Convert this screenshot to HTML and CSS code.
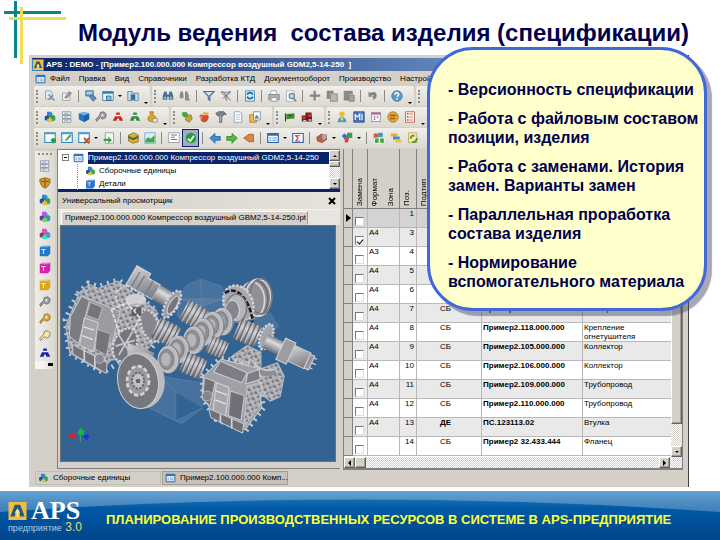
FILE: index.html
```html
<!DOCTYPE html>
<html lang="ru">
<head>
<meta charset="utf-8">
<title>Модуль ведения состава изделия</title>
<link rel="stylesheet" href="styles.css">
</head>
<body>
<svg class="sprite" aria-hidden="true">
  <symbol id="i-page" viewBox="0 0 16 16"><path d="M2 1h7l2 3v8H2z" fill="#dfe6ee" stroke="#8a97a8"/><path d="M6 6l8 8M6 13l6-6" stroke="#7d8ea6" stroke-width="2"/></symbol>
  <symbol id="i-edit" viewBox="0 0 16 16"><path d="M2 4h10v10H2z" fill="#eceff2" stroke="#8b98a5"/><path d="M5 10l6-8 3 2-6 7z" fill="#c98f8f" stroke="#77808c"/></symbol>
  <symbol id="i-server" viewBox="0 0 16 16"><path d="M1 1h10v7H1z" fill="#5fa0cf" stroke="#46657d"/><path d="M2 3h8M2 5h8" stroke="#e9f3fa"/><path d="M6 9l4-3 5 5-4 4z" fill="#5c8db3" stroke="#365a77"/></symbol>
  <symbol id="i-form" viewBox="0 0 16 16"><path d="M1 2h14v12H1z" fill="#e8f4fb" stroke="#2b7199"/><path d="M1 2h14v3H1z" fill="#2c87b8"/><path d="M6 8h6v6H6z" fill="#7cc0d8" stroke="#24617f"/></symbol>
  <symbol id="i-columns" viewBox="0 0 16 16"><path d="M1 2h6v12H1zM9 4h6v10H9z" fill="#c6dcea" stroke="#587992"/><path d="M5 6h6v7H5z" fill="#3b6d91"/></symbol>
  <symbol id="i-binoc" viewBox="0 0 16 16"><path d="M3 2h3l1 5v6H1V8zM10 2h3l2 6v5H9V7zM6 6h4v3H6z" fill="#4a6d94"/><path d="M3 9h2v3H3zM11 9h2v3h-2z" fill="#b8cce2"/></symbol>
  <symbol id="i-binocgray" viewBox="0 0 16 16"><path d="M2 2h3l1 4v5H1V7zM8 2h3l2 5v4l2 3H8V6z" fill="#8b8b88"/></symbol>
  <symbol id="i-funnel" viewBox="0 0 16 16"><path d="M1 2h14L9 8v6l-2-2V8z" fill="#d4e0f1" stroke="#4a6896" stroke-width="1.5"/></symbol>
  <symbol id="i-funneloff" viewBox="0 0 16 16"><path d="M1 3h13L9 8v6l-2-2V8z" fill="#dfe3e8" stroke="#69727d"/><path d="M3 1l11 13M14 1L4 11" stroke="#505d6b"/></symbol>
  <symbol id="i-refresh" viewBox="0 0 16 16"><path d="M2 1h12v14H2z" fill="#d2e8f5" stroke="#3480ad"/><path d="M4 6q4-5 8 0M12 9q-4 5-8 0" fill="none" stroke="#176fae" stroke-width="2.5"/></symbol>
  <symbol id="i-print" viewBox="0 0 16 16"><path d="M4 1h7l1 5H3z" fill="#fff" stroke="#92989e"/><path d="M1 6h14v7H1z" fill="#aeb3b8" stroke="#777e86"/><path d="M4 10h8v5H4z" fill="#f2f2f2" stroke="#85898e"/></symbol>
  <symbol id="i-preview" viewBox="0 0 16 16"><path d="M2 1h10v14H2z" fill="#f8fafb" stroke="#9ba6b0"/><circle cx="9" cy="8" r="3.5" fill="#c3d9e8" stroke="#65859d" stroke-width="1.5"/><path d="M11 11l4 4" stroke="#65859d" stroke-width="2"/></symbol>
  <symbol id="i-cut" viewBox="0 0 16 16"><path d="M6 1h3v5h6v3H9v5H6V9H1V6h5z" fill="#858582"/></symbol>
  <symbol id="i-copy" viewBox="0 0 16 16"><path d="M1 1h9v3H5v8H1z" fill="#858582"/><path d="M6 5h9v10H6z" fill="#b9b8b2" stroke="#777"/></symbol>
  <symbol id="i-paste" viewBox="0 0 16 16"><path d="M1 1h12v5H8v8H1z" fill="#8b8a86"/><path d="M8 7h7v8H8z" fill="#a5a49f" stroke="#777"/></symbol>
  <symbol id="i-undo" viewBox="0 0 16 16"><path d="M2 2l2 2q8-4 9 3 0 4-5 6V9q2-3-2-2l2 2H2z" fill="#858582"/></symbol>
  <symbol id="i-help" viewBox="0 0 16 16"><circle cx="8" cy="8" r="7" fill="#5f9bc9" stroke="#3f6e93"/><path d="M5 6q1-3 4-2 3 2-1 5M8 11v2" fill="none" stroke="#fff" stroke-width="2"/></symbol>
  <symbol id="i-cubes" viewBox="0 0 16 16"><path d="M4 1h5l2 2v5H4z" fill="#2f86cf"/><path d="M1 7l3-1 3 1v5l-3 1-3-1z" fill="#1b4f9f"/><path d="M8 7l4-2 3 2v5l-3 2-4-2z" fill="#35a446"/><path d="M4 11l4-2 3 2v3l-3 1-4-1z" fill="#e8be32"/></symbol>
  <symbol id="i-list" viewBox="0 0 16 16"><path d="M2 1h11v4H2zM2 6h11v4H2zM2 11h11v4H2z" fill="#f4f7fa" stroke="#77889a"/><path d="M4 3h6M4 8h6M4 13h6" stroke="#889"/></symbol>
  <symbol id="i-cube" viewBox="0 0 16 16"><path d="M1 3l7-2 7 2v8l-7 4-7-4z" fill="currentColor"/><path d="M1 3l7-2 7 2-7 3z" fill="#fff" opacity=".4"/><path d="M8 6l7-3v8l-7 4z" fill="#000" opacity=".18"/></symbol>
  <symbol id="i-tcube" viewBox="0 0 16 16"><path d="M1 3l3-2h11v10l-3 4H1z" fill="currentColor"/><path d="M1 3l3-2h11l-3 2z" fill="#fff" opacity=".4"/><path d="M3 6h6M6 6v6" stroke="#fff" stroke-width="1.5" opacity=".8"/></symbol>
  <symbol id="i-bolt" viewBox="0 0 16 16"><path d="M7 2l5-1 3 3-1 5-4 2-3-2-5 5-1-3 5-5z" fill="currentColor" stroke="#555" stroke-width=".8"/><path d="M9 3l3 2-1 3-3-1z" fill="#fff" opacity=".6"/></symbol>
  <symbol id="i-tree" viewBox="0 0 16 16"><path d="M6 2h4l1 3H5zM4 7h8l3 6h-5l-1-3H7l-1 3H1z" fill="currentColor"/><path d="M5 6h6" stroke="#fff"/></symbol>
  <symbol id="i-bag" viewBox="0 0 16 16"><path d="M5 1h5L9 5q5 2 4 7-1 3-6 2-6 0-4-6l3-3z" fill="#dda526" stroke="#9b701a"/><path d="M9 10h6v5H9z" fill="#e8e4d8" stroke="#8b8b80"/></symbol>
  <symbol id="i-parts" viewBox="0 0 16 16"><path d="M1 2l6-1 3 4-4 4-4-2z" fill="#4ca443"/><path d="M7 7l6-2 2 5-4 5-5-3z" fill="#c7a238" stroke="#73702b"/></symbol>
  <symbol id="i-apple" viewBox="0 0 16 16"><path d="M2 6q3-3 6 0 4-3 6 0 1 6-4 9-7 1-8-9z" fill="#d74e2e"/><path d="M8 1v5M9 3h5" stroke="#e8a545" stroke-width="2"/><path d="M4 7v4" stroke="#fff"/></symbol>
  <symbol id="i-hammer" viewBox="0 0 16 16"><path d="M1 3l4-2h7l3 4-4-1v2l-2 1v8H6V7L3 6z" fill="#7e858b" stroke="#4e555b"/><path d="M7 7v7" stroke="#dde1e4"/></symbol>
  <symbol id="i-doc" viewBox="0 0 16 16"><path d="M3 1h8l2 3v11H3z" fill="#fff" stroke="#7593b2"/><path d="M5 5h6M5 8h6M5 11h6" stroke="#91aecd"/></symbol>
  <symbol id="i-photo" viewBox="0 0 16 16"><path d="M1 5h9v10H1z" fill="#f0bd42" stroke="#a47520"/><path d="M6 1h9v11H6z" fill="#fff" stroke="#64829f"/><path d="M7 10l3-5 4 5z" fill="#3d87bf"/></symbol>
  <symbol id="i-flag" viewBox="0 0 16 16"><path d="M3 4l11-1v7L3 11z" fill="#448c35"/><path d="M2 3v11M6 6h5" stroke="#254f20" stroke-width="1.5"/></symbol>
  <symbol id="i-machine" viewBox="0 0 16 16"><path d="M1 6h5V2h8l1 12H1z" fill="#4f2529"/><path d="M2 7h4v4H2zM9 4h4v4H9z" fill="#d8312d"/><path d="M3 13h4M10 12h4" stroke="#e7c3b5" stroke-width="2"/></symbol>
  <symbol id="i-user" viewBox="0 0 16 16"><circle cx="8" cy="4" r="3.5" fill="#edbd35"/><path d="M2 15q1-7 6-7t6 7z" fill="#4a9fc4"/><path d="M6 9h4l-2 5z" fill="#f3df76"/></symbol>
  <symbol id="i-chart" viewBox="0 0 16 16"><path d="M1 1h14v14H1z" fill="#4a73bd" stroke="#2b4b8d"/><path d="M3 12V5l3 3 3-4v8M12 4v8" fill="none" stroke="#fff" stroke-width="1.5"/></symbol>
  <symbol id="i-cal" viewBox="0 0 16 16"><path d="M2 2h12v12H2z" fill="#f6f3f7" stroke="#8c8299"/><path d="M2 2h12v3H2z" fill="#b7708c"/><path d="M5 8h2M9 8h2M5 11h2" stroke="#6f7ea2" stroke-width="2"/></symbol>
  <symbol id="i-coin" viewBox="0 0 16 16"><circle cx="8" cy="8" r="7" fill="#e6a72f" stroke="#a9701d"/><path d="M4 6h8M4 10h7" stroke="#985e18" stroke-width="2"/></symbol>
  <symbol id="i-report" viewBox="0 0 16 16"><path d="M2 1h12v14H2z" fill="#fff5ed" stroke="#b34e37"/><path d="M4 4h2M4 8h2M4 12h2" stroke="#c63d2d" stroke-width="2"/><path d="M7 4h5M7 8h5M7 12h5" stroke="#777"/></symbol>
  <symbol id="i-win" viewBox="0 0 16 16"><path d="M1 1h14v13H1z" fill="#f8fcff" stroke="#3288b5" stroke-width="1.4"/><path d="M1 1h14v2H1z" fill="#4ea0c9"/></symbol>
  <symbol id="i-plus" viewBox="0 0 16 16"><path d="M9 11h7M12.500 8v7" stroke="#1f9b32" stroke-width="3"/></symbol>
  <symbol id="i-pen" viewBox="0 0 16 16"><path d="M5 11l7-8 2 2-7 7z" fill="#43a458"/></symbol>
  <symbol id="i-x" viewBox="0 0 16 16"><path d="M8 8l7 7M15 8l-7 7" stroke="#d84c28" stroke-width="2.500"/></symbol>
  <symbol id="i-export" viewBox="0 0 16 16"><path d="M3 1h11v14H3z" fill="#f4f7f4" stroke="#839286"/><path d="M1 9h6V6l5 5-5 4v-3H1z" fill="#3f9d46"/></symbol>
  <symbol id="i-box" viewBox="0 0 16 16"><path d="M2 4l7-3 6 3v9l-7 2-6-3z" fill="#e4ad2b" stroke="#866921"/><path d="M2 5l6 3 7-3v3l-7 3-6-3z" fill="#32714b"/></symbol>
  <symbol id="i-graph" viewBox="0 0 16 16"><path d="M1 1h14v14H1z" fill="#dceefa" stroke="#6aa0bd"/><path d="M2 14v-4l4-3 3 2 5-5v10z" fill="#43a64d"/></symbol>
  <symbol id="i-text" viewBox="0 0 16 16"><path d="M1 1h14v13H1z" fill="#fff" stroke="#8a8f94"/><path d="M4 4h8M4 7h5M4 10h8" stroke="#444"/></symbol>
  <symbol id="i-ok" viewBox="0 0 16 16"><circle cx="8" cy="8" r="7" fill="#2b9c3e"/><path d="M4 9l3 3 5-7" fill="none" stroke="#e7ffe5" stroke-width="2.500"/></symbol>
  <symbol id="i-left" viewBox="0 0 16 16"><path d="M1 8l7-6v4h7v5H8v4z" fill="#3d8ed6" stroke="#1f5ba0"/></symbol>
  <symbol id="i-right" viewBox="0 0 16 16"><path d="M15 8L8 2v4H1v5h7v4z" fill="#55b93c" stroke="#2e7f21"/></symbol>
  <symbol id="i-back" viewBox="0 0 16 16"><path d="M1 8l7-5h6v10H8z" fill="#e27d3b" stroke="#ae4e29"/><path d="M8 7h5M8 10h5" stroke="#8cb64b" stroke-width="2"/></symbol>
  <symbol id="i-table" viewBox="0 0 16 16"><path d="M1 2h14v12H1z" fill="#fff" stroke="#245f9e" stroke-width="1.500"/><path d="M1 2h14v3H1z" fill="#2d72b6"/><path d="M3 8h3M3 11h3M7 8h6M7 11h6" stroke="#5c93c8" stroke-width="1.500"/></symbol>
  <symbol id="i-sum" viewBox="0 0 16 16"><path d="M1 2h14v12H1z" fill="#fff" stroke="#37669f" stroke-width="1.500"/><path d="M11 5H5l3 3-3 4h6" fill="none" stroke="#c23b40" stroke-width="1.500"/></symbol>
  <symbol id="i-red" viewBox="0 0 16 16"><path d="M1 7l6-4 7 1v6l-6 4-6-2z" fill="#ca5b42" stroke="#814139"/><path d="M8 4l6-2v6l-5 3z" fill="#a5adb3"/></symbol>
  <symbol id="i-shapes" viewBox="0 0 16 16"><path d="M8 1h7v7H8z" fill="#37a246"/><path d="M1 5l4-3 4 4-4 4z" fill="#3a6ec4"/><path d="M5 8h6l-2 6H5z" fill="#db4238"/></symbol>
  <symbol id="i-blocks" viewBox="0 0 16 16"><path d="M1 2h6v7H1z" fill="#d6563a"/><path d="M7 1h6v6H7z" fill="#4f8dc9"/><path d="M2 8h6v7H2zM9 8h6v7H9z" fill="#42a43c" stroke="#fff"/></symbol>
  <symbol id="i-layers" viewBox="0 0 16 16"><path d="M1 2h9v4H1z" fill="#ebad2c"/><path d="M4 6h9v4H4z" fill="#4e89c7"/><path d="M7 10h8v4H7z" fill="#ebc24b"/></symbol>
  <symbol id="i-cycle" viewBox="0 0 16 16"><path d="M2 1h11v13H2z" fill="#f7e7b0" stroke="#c19f42"/><path d="M5 9q0-5 5-4M13 8q0 6-6 5" fill="none" stroke="#3d9b3e" stroke-width="2.500"/></symbol>
  <symbol id="i-shield" viewBox="0 0 16 16"><path d="M1 3l7-2 7 2q0 9-7 12-7-3-7-12z" fill="#cf9a28" stroke="#815b17"/><path d="M8 2v11M3 6h4M9 6h4" stroke="#5e4412"/></symbol>
  <symbol id="i-logo" viewBox="0 0 20 20"><path d="M0 0h20v20H0z" fill="#f3bd45"/><path d="M2 16L7 3h6l5 13h-5l-1-5q-2-3-4 0l-1 5z" fill="#245b7e"/><path d="M10 7l3 5h-2v5H9v-5H7z" fill="#f9e6a5"/></symbol>
</svg>

<header class="slide-head">
  <svg class="cross" viewBox="0 0 66 66" aria-hidden="true">
    <path d="M4 12.500h57" stroke="#0a8585" stroke-width="3"/><path d="M15.500 1v57" stroke="#0a8585" stroke-width="3"/>
    <path d="M9 18.500h58" stroke="#eedd55" stroke-width="3"/><path d="M21.500 7v57" stroke="#eedd55" stroke-width="3"/>
  </svg>
  <h1>Модуль ведения&nbsp; состава изделия (спецификации)</h1>
</header>

<main class="window">
  <div class="titlebar"><svg class="logo-s"><use href="#i-logo"/></svg><span>APS : DEMO - [Пример2.100.000.000 Компрессор воздушный GDM2,5-14-250&nbsp; ]</span></div>
  <nav class="menu"><svg class="ico"><use href="#i-table"/></svg><button>Файл</button><button>Правка</button><button>Вид</button><button>Справочники</button><button>Разработка КТД</button><button>Документооборот</button><button>Производство</button><button>Настрой</button></nav>

  <div class="bar">
    <div class="group">
      <button class="tool" aria-label="Создать"><svg><use href="#i-page"/></svg></button><button class="tool" aria-label="Править"><svg><use href="#i-edit"/></svg></button><i class="sep"></i><button class="tool" aria-label="Сервер"><svg><use href="#i-server"/></svg></button><button class="tool" aria-label="Форма"><svg><use href="#i-form"/></svg></button><i class="drop"></i><button class="tool" aria-label="Колонки"><svg><use href="#i-columns"/></svg></button><i class="more"></i>
    </div>
    <div class="group">
      <button class="tool" aria-label="Найти"><svg><use href="#i-binoc"/></svg></button><button class="tool" aria-label="Найти далее"><svg><use href="#i-binocgray"/></svg></button><i class="sep"></i><button class="tool" aria-label="Фильтр"><svg><use href="#i-funnel"/></svg></button><button class="tool" aria-label="Снять фильтр"><svg><use href="#i-funneloff"/></svg></button><i class="sep"></i><button class="tool" aria-label="Обновить"><svg><use href="#i-refresh"/></svg></button><i class="sep"></i><button class="tool" aria-label="Печать"><svg><use href="#i-print"/></svg></button><button class="tool" aria-label="Просмотр"><svg><use href="#i-preview"/></svg></button><i class="sep"></i><button class="tool" aria-label="Вырезать"><svg><use href="#i-cut"/></svg></button><button class="tool" aria-label="Копировать"><svg><use href="#i-copy"/></svg></button><button class="tool" aria-label="Вставить"><svg><use href="#i-paste"/></svg></button><i class="sep"></i><button class="tool" aria-label="Отменить"><svg><use href="#i-undo"/></svg></button><i class="sep"></i><button class="tool" aria-label="Справка"><svg><use href="#i-help"/></svg></button><i class="more"></i>
    </div>
    <div class="group"></div>
  </div>
  <div class="bar">
    <div class="group">
      <button class="tool" aria-label="Сборки"><svg><use href="#i-cubes"/></svg></button><button class="tool" aria-label="Список"><svg><use href="#i-list"/></svg></button><button class="tool blue" aria-label="Детали"><svg><use href="#i-cube"/></svg></button><button class="tool gray" aria-label="Крепёж"><svg><use href="#i-bolt"/></svg></button><button class="tool red" aria-label="Состав"><svg><use href="#i-tree"/></svg></button><button class="tool green" aria-label="Применяемость"><svg><use href="#i-tree"/></svg></button><button class="tool" aria-label="Материалы"><svg><use href="#i-bag"/></svg></button><i class="more"></i>
    </div>
    <div class="group">
      <button class="tool" aria-label="Узлы"><svg><use href="#i-parts"/></svg></button><button class="tool" aria-label="Сырьё"><svg><use href="#i-apple"/></svg></button><button class="tool" aria-label="Инструмент"><svg><use href="#i-hammer"/></svg></button><button class="tool" aria-label="Документ"><svg><use href="#i-doc"/></svg></button><button class="tool" aria-label="Чертёж"><svg><use href="#i-photo"/></svg></button><i class="more"></i>
    </div>
    <div class="group">
      <button class="tool" aria-label="Цех"><svg><use href="#i-flag"/></svg></button><button class="tool" aria-label="Станок"><svg><use href="#i-machine"/></svg></button><i class="more"></i>
    </div>
    <div class="group">
      <button class="tool" aria-label="Сотрудник"><svg><use href="#i-user"/></svg></button><button class="tool" aria-label="График"><svg><use href="#i-chart"/></svg></button><button class="tool" aria-label="Календарь"><svg><use href="#i-cal"/></svg></button><button class="tool" aria-label="Стоимость"><svg><use href="#i-coin"/></svg></button><button class="tool" aria-label="Отчёт"><svg><use href="#i-report"/></svg></button><i class="more"></i>
    </div>
  </div>
  <div class="bar">
    <div class="group">
      <button class="tool" aria-label="Добавить"><svg><use href="#i-win"/><use href="#i-plus"/></svg></button><button class="tool" aria-label="Изменить"><svg><use href="#i-win"/><use href="#i-pen"/></svg></button><button class="tool" aria-label="Удалить"><svg><use href="#i-win"/><use href="#i-x"/></svg></button><i class="drop"></i><button class="tool" aria-label="Экспорт"><svg><use href="#i-export"/></svg></button><i class="sep"></i><button class="tool" aria-label="Архив"><svg><use href="#i-box"/></svg></button><button class="tool" aria-label="Диаграмма"><svg><use href="#i-graph"/></svg></button><i class="sep"></i><button class="tool" aria-label="Текст"><svg><use href="#i-text"/></svg></button><button class="tool on" aria-label="Утвердить"><svg><use href="#i-ok"/></svg></button><i class="sep"></i><button class="tool" aria-label="Назад"><svg><use href="#i-left"/></svg></button><button class="tool" aria-label="Вперёд"><svg><use href="#i-right"/></svg></button><button class="tool" aria-label="Вернуть"><svg><use href="#i-back"/></svg></button><i class="sep"></i><button class="tool" aria-label="Таблица"><svg><use href="#i-table"/></svg></button><i class="drop"></i><button class="tool" aria-label="Итоги"><svg><use href="#i-sum"/></svg></button><i class="sep"></i><button class="tool" aria-label="Модель"><svg><use href="#i-red"/></svg></button><i class="drop"></i><button class="tool" aria-label="Фигуры"><svg><use href="#i-shapes"/></svg></button><i class="drop"></i><i class="sep"></i><button class="tool" aria-label="Блоки"><svg><use href="#i-blocks"/></svg></button><button class="tool" aria-label="Слои"><svg><use href="#i-layers"/></svg></button><button class="tool" aria-label="Замены"><svg><use href="#i-cycle"/></svg></button>
    </div>
  </div>

  <div class="work">
    <aside class="side">
      <button class="tool" aria-label="Перечень"><svg><use href="#i-list"/></svg></button>
      <button class="tool" aria-label="Защита"><svg><use href="#i-shield"/></svg></button>
      <button class="tool" aria-label="Сборочные единицы"><svg><use href="#i-cubes"/></svg></button>
      <button class="tool hue-a" aria-label="Комплексы"><svg><use href="#i-cubes"/></svg></button>
      <button class="tool hue-b" aria-label="Комплекты"><svg><use href="#i-cubes"/></svg></button>
      <button class="tool blue" aria-label="Детали"><svg><use href="#i-tcube"/></svg></button>
      <button class="tool pink" aria-label="Заготовки"><svg><use href="#i-tcube"/></svg></button>
      <button class="tool gold" aria-label="Материалы"><svg><use href="#i-tcube"/></svg></button>
      <button class="tool gray" aria-label="Стандартные"><svg><use href="#i-bolt"/></svg></button>
      <button class="tool gold" aria-label="Прочие"><svg><use href="#i-bolt"/></svg></button>
      <button class="tool cream" aria-label="Покупные"><svg><use href="#i-bolt"/></svg></button>
      <button class="tool navy" aria-label="Структура"><svg><use href="#i-tree"/></svg></button>
      <i class="side-end"></i>
    </aside>

    <section class="left">
      <div class="tree">
        <ul>
          <li class="sel"><i class="minus"></i><svg class="ico"><use href="#i-table"/></svg><span>Пример2.100.000.000 Компрессор воздушный GDM2,5-14-250</span></li>
          <li class="child"><svg class="ico"><use href="#i-cubes"/></svg><span>Сборочные единицы</span></li>
          <li class="child"><svg class="ico blue"><use href="#i-tcube"/></svg><span>Детали</span></li>
        </ul>
        <div class="vscroll"><button class="arrow up" aria-label="Вверх"></button><i class="thumb"></i><button class="arrow down" aria-label="Вниз"></button></div>
      </div>
      <div class="pane-head"><span>Универсальный просмотрщик</span><button aria-label="Закрыть"><svg viewBox="0 0 8 8"><path d="M1 1l6 6M7 1L1 7" stroke="#000" stroke-width="2"/></svg></button></div>
      <div class="tabs"><button>Пример2.100.000.000 Компрессор воздушный GBM2,5-14-250.ipt</button></div>
      <div class="view">
        <svg viewBox="120 -72 825 708" preserveAspectRatio="xMidYMid slice" role="img" aria-label="Модель компрессора">
          <defs>
            <linearGradient id="m" x1="0" y1="0" x2="1" y2="1"><stop offset="0" stop-color="#cfcfd3"/><stop offset=".5" stop-color="#a2a3a9"/><stop offset="1" stop-color="#77787f"/></linearGradient>
            <linearGradient id="cyl" x1="0" y1="0" x2="0" y2="1"><stop offset="0" stop-color="#85868c"/><stop offset=".35" stop-color="#dddde0"/><stop offset="1" stop-color="#6d6e75"/></linearGradient>
            <pattern id="mesh" width="22" height="20" patternUnits="userSpaceOnUse" patternTransform="rotate(24)"><path d="M0 0h22v20H0z" fill="#a9aab0"/><path d="M2 3h9v6H2zM14 11h6v6h-6z" fill="#74757c"/><path d="M12 2h8M1 14h10M11 9v10" stroke="#d8d8dc" stroke-width="2"/></pattern>
            <g id="ring"><ellipse rx="33" ry="42" fill="#85868c"/><ellipse cx="-3" rx="30" ry="40" fill="#b9babf" stroke="#dcdce0" stroke-width="2"/><ellipse cx="-7" rx="22" ry="30" fill="#8e8f95" stroke="#6c6d74" stroke-width="2"/><ellipse cx="-9" rx="14" ry="20" fill="#b5b5ba"/></g>
            <g id="ribs"><path d="M0-32h70v64H0z" fill="url(#cyl)"/><path d="M6-34v68M20-34v68M34-34v68M48-34v68M62-34v68" stroke="#66676e" stroke-width="4"/><path d="M12-34v68M26-34v68M40-34v68M54-34v68" stroke="#c6c6ca" stroke-width="3"/></g>
          </defs>
          <g fill="#7f9cbb" fill-opacity=".28" stroke="#8aa4bf" stroke-opacity=".5" stroke-width="1.500">
            <path d="M470 145l30-40 40-17 65 22 15 60-80 60-70-30z"/><path d="M470 145l75 25 75-25M545 170l-5-80M700 205l50-15 25 40-60 60-60-20z"/><path d="M420 380l125 20v78l-62 46-100-48zM420 430l-37 46M466 430v85l80-40M466 430l-46-50"/>
          </g>
          <path d="M170 132l32-32 30 10 62-20 60 50 50 40 10 90-60 70-60 0-48 30-102-60-12-100z" fill="none" stroke="#c5c6ca" stroke-width="15" stroke-dasharray="6 15"/>
          <path d="M175 128l30-24 28 12 58-22 64 48 52 40 8 80-56 60-88 10-30 35-95-57-12-80z" fill="url(#mesh)" stroke="#b8b9be" stroke-width="3"/>
          <g transform="translate(385 115) rotate(30)"><path d="M-65-40h48v15h42v50h-90z" fill="url(#m)" stroke="#d7d7da" stroke-width="3"/><path d="M-48-28v50M-30-25v48M0-25v50" stroke="#777980" stroke-width="4"/><path d="M25-25h55v50H25z" fill="url(#cyl)"/><ellipse cx="84" cy="8" rx="18" ry="46" fill="#9c9da3" stroke="#d6d6da" stroke-width="7" stroke-dasharray="7 5"/><ellipse cx="88" cy="8" rx="11" ry="30" fill="#77787e" stroke="#d7d7da" stroke-width="3"/></g>
          <use href="#ribs" transform="translate(490 180) rotate(29)"/>
          <ellipse cx="388" cy="228" rx="26" ry="50" transform="rotate(-20 388 228)" fill="#85868d" stroke="#d0d0d4" stroke-width="8" stroke-dasharray="7 5"/>
          <ellipse cx="345" cy="150" rx="32" ry="18" fill="#d0d0d4"/><path d="M332 165h30v35h-30z" fill="#5d5e64"/><ellipse cx="347" cy="167" rx="15" ry="6" fill="#b5b6bb"/>
          <use href="#ribs" transform="translate(405 232) rotate(28)"/>
          <path d="M182 138l116 48-25 98-130-53z" fill="#9b9ca2" stroke="#c6c7cc" stroke-width="3"/>
          <path d="M148 202l34-62 24 12-33 130-28-22z" fill="#7c7d83" stroke="#c7c8cc" stroke-width="3"/><path d="M208 158l37 15-12 38-36-14z" fill="#75767c" stroke="#d1d1d5" stroke-width="2"/><path d="M190 205l42 14-14 88-42-20z" fill="#a4a5ab" stroke="#d6d6da" stroke-width="3"/><path d="M188 232l32 10M184 258l32 12" stroke="#e3e3e6" stroke-width="4"/><path d="M229 240l40 13-12 64-34-18z" fill="#74757b" stroke="#c8c9cd" stroke-width="2"/><path d="M154 285l105 55-3 32-100-58z" fill="#74757c" stroke="#c7c8cd" stroke-width="3"/><path d="M190 302v37M222 318v40" stroke="#d3d3d7" stroke-width="5"/><circle cx="236" cy="328" r="14" fill="#898a91" stroke="#cacbd0" stroke-width="2"/>
          <path d="M285 126l28-20 55 30-25 45-55-20z" fill="none" stroke="#d8d8dc" stroke-width="4" stroke-dasharray="9 4"/><path d="M272 180l48-20 38 45-20 36-44 5z" fill="none" stroke="#e0e0e3" stroke-width="5" stroke-dasharray="12 4"/>
          <ellipse cx="313" cy="286" rx="34" ry="52" transform="rotate(22 313 286)" fill="#75767d" stroke="#cfcfd3" stroke-width="7" stroke-dasharray="8 4"/><path d="M290 250l44 70M336 245l-42 72M284 290l58-18" stroke="#c9c9ce" stroke-width="5"/>
          <path d="M320 280l80 30-10 60-70-15z" fill="url(#m)"/>
          <g><ellipse cx="712" cy="145" rx="44" ry="58" fill="#909197"/><g fill="none" stroke-width="5"><ellipse cx="695" cy="152" rx="38" ry="55" stroke="#d7d7da"/><ellipse cx="705" cy="148" rx="38" ry="56" stroke="#696a71"/><ellipse cx="714" cy="144" rx="38" ry="56" stroke="#d5d5d9"/><ellipse cx="722" cy="140" rx="33" ry="53" stroke="#76777e"/></g><ellipse cx="654" cy="162" rx="43" ry="57" transform="rotate(-24 654 162)" fill="#a8a9ae" stroke="#d3d3d7" stroke-width="7" stroke-dasharray="8 4"/><path d="M613 130q38-25 70 35 12 25 14 52" fill="none" stroke="#202126" stroke-width="8" stroke-dasharray="15 5"/><ellipse cx="648" cy="176" rx="31" ry="42" fill="#b5b6bb" stroke="#77787f" stroke-width="4"/><ellipse cx="636" cy="182" rx="21" ry="30" fill="#85868d" stroke="#dddde0" stroke-width="3"/></g>
          <use href="#ring" x="608" y="216"/><use href="#ring" x="580" y="228"/><use href="#ring" x="550" y="248"/><use href="#ring" x="522" y="272"/><use href="#ring" x="476" y="300"/><use href="#ring" x="445" y="330"/>
          <use href="#ribs" transform="translate(650 235) rotate(24)"/><use href="#ribs" transform="translate(565 282) rotate(24) scale(.8)"/><use href="#ribs" transform="translate(488 335) rotate(24) scale(.95)"/>
          <ellipse cx="362" cy="392" rx="70" ry="86" transform="rotate(-10 362 392)" fill="#bbbcc1"/><ellipse cx="352" cy="395" rx="61" ry="83" transform="rotate(-10 352 395)" fill="#77787e" stroke="#d3d3d7" stroke-width="3"/><ellipse cx="352" cy="394" rx="33" ry="44" fill="#999aa0" stroke="#d5d5d9" stroke-width="8" stroke-dasharray="13 7"/><ellipse cx="352" cy="394" rx="18" ry="24" fill="#bfc0c4" stroke="#5e5f65" stroke-width="5" stroke-dasharray="7 4"/><circle cx="352" cy="395" r="7" fill="#64656c"/>
          <ellipse cx="738" cy="262" rx="18" ry="40" transform="rotate(20 738 262)" fill="#a4a5aa" stroke="#d8d8db" stroke-width="7" stroke-dasharray="7 4"/>
          <g transform="translate(735 275) rotate(25)"><path d="M0-22h62v44H0z" fill="url(#cyl)"/><path d="M52-34h34v70H52z" fill="#9c9da3" stroke="#d4d4d8" stroke-width="3"/><path d="M88-26h52v52H88z" fill="url(#m)" stroke="#c8c9cd" stroke-width="3"/><path d="M140-22h14v46h-14z" fill="#94959b" stroke="#d4d4d8" stroke-width="3"/><path d="M154-16h10M154 0h14M154 16h10" stroke="#d2d2d6" stroke-width="4"/></g>
          <path d="M632 322l48-34 42 20 0 50 50-18 20 40-12 62-30 14-45-35z" fill="url(#mesh)" stroke="#bdbec3" stroke-width="3"/><path d="M695 340q25 40 70 26" fill="none" stroke="#8d8e94" stroke-width="20"/><path d="M695 333q25 38 68 27" fill="none" stroke="#d7d7da" stroke-width="4"/>
          <path d="M546 380l54-54 110 20 20 130-54 70-90-36-38-60z" fill="none" stroke="#c9cacf" stroke-width="15" stroke-dasharray="6 14"/>
          <path d="M548 382l54-53 110 27 12 120-50 66-90-40-38-60z" fill="#a0a1a7" stroke="#cfcfd3" stroke-width="3"/><path d="M600 335l80 35-16 30-84-32zM682 372l34-12 4 30-44 14z" fill="#7d7e85" stroke="#d3d3d7" stroke-width="3"/><path d="M552 385l32 12-15 72-22-18zM630 425l42 14-10 74-38-14z" fill="#707178" stroke="#ccccd0" stroke-width="3"/><path d="M588 400l38 14-10 88-38-18z" fill="#a7a8ad" stroke="#dadade" stroke-width="3"/><path d="M586 425l34 12M584 452l32 12" stroke="#e3e3e6" stroke-width="4"/><path d="M565 478l105 46-3 28-96-47z" fill="#707178" stroke="#ccccd0" stroke-width="3"/><path d="M600 495v27M634 508v30" stroke="#d4d4d8" stroke-width="5"/><path d="M680 410l45-10-5 65-50 70z" fill="url(#mesh)" stroke="#c3c4c9" stroke-width="3"/><circle cx="560" cy="440" r="15" fill="#85868c" stroke="#cdced2" stroke-width="2"/>
          <path d="M178 578v-28" stroke="#34b95a" stroke-width="3"/><path d="M168 553l10-17 13 10-4 12z" fill="#15b43c"/><path d="M144 556l15-5 5 9-11 13z" fill="#e21f25"/><path d="M186 562l12-8 8 8-8 12z" fill="#1f2fe0"/>
        </svg>
      </div>
    </section>

    <section class="grid">
      <div class="grid-body">
        <table>
          <colgroup><col class="c-mark"><col class="c-chk"><col class="c-fmt"><col class="c-zone"><col class="c-pos"><col class="c-kind"><col class="c-code"><col></colgroup>
          <thead><tr><th></th><th><span>Замена</span></th><th class="open"><span>Формат</span></th><th><span>Зона</span></th><th><span>Поз.</span></th><th><span>Подтип</span></th><th></th><th></th></tr></thead>
          <tbody>
            <tr class="cur"><td><i class="here"></i></td><td><input type="checkbox" aria-label="Замена 1"></td><td class="open"></td><td></td><td>1</td><td></td><td></td><td></td></tr>
            <tr><td></td><td><input type="checkbox" aria-label="Замена 3" checked></td><td class="open">A4</td><td></td><td>3</td><td></td><td></td><td></td></tr>
            <tr><td></td><td><input type="checkbox" aria-label="Замена 4"></td><td class="open">A3</td><td></td><td>4</td><td></td><td></td><td></td></tr>
            <tr><td></td><td><input type="checkbox" aria-label="Замена 5"></td><td class="open">A4</td><td></td><td>5</td><td></td><td></td><td></td></tr>
            <tr><td></td><td><input type="checkbox" aria-label="Замена 6"></td><td class="open">A4</td><td></td><td>6</td><td></td><td></td><td></td></tr>
            <tr><td></td><td><input type="checkbox" aria-label="Замена 7"></td><td class="open">A4</td><td></td><td>7</td><td>СБ</td><td>Пример2.117.000.000</td><td>Фильтр</td></tr>
            <tr><td></td><td><input type="checkbox" aria-label="Замена 8"></td><td class="open">A4</td><td></td><td>8</td><td>СБ</td><td>Пример2.118.000.000</td><td>Крепление огнетушителя</td></tr>
            <tr><td></td><td><input type="checkbox" aria-label="Замена 9"></td><td class="open">A4</td><td></td><td>9</td><td>СБ</td><td>Пример2.105.000.000</td><td>Коллектор</td></tr>
            <tr><td></td><td><input type="checkbox" aria-label="Замена 10"></td><td class="open">A4</td><td></td><td>10</td><td>СБ</td><td>Пример2.106.000.000</td><td>Коллектор</td></tr>
            <tr><td></td><td><input type="checkbox" aria-label="Замена 11"></td><td class="open">A4</td><td></td><td>11</td><td>СБ</td><td>Пример2.109.000.000</td><td>Трубопровод</td></tr>
            <tr><td></td><td><input type="checkbox" aria-label="Замена 12"></td><td class="open">A4</td><td></td><td>12</td><td>СБ</td><td>Пример2.110.000.000</td><td>Трубопровод</td></tr>
            <tr><td></td><td><input type="checkbox" aria-label="Замена 13"></td><td class="open">A4</td><td></td><td>13</td><td><b>ДЕ</b></td><td>ПС.123113.02</td><td>Втулка</td></tr>
            <tr><td></td><td><input type="checkbox" aria-label="Замена 14"></td><td class="open"></td><td></td><td>14</td><td>СБ</td><td>Пример2 32.433.444</td><td>Фланец</td></tr>
          </tbody>
        </table>
        <div class="vscroll"><i class="thumb"></i><button class="arrow down" aria-label="Вниз"></button></div>
      </div>
      <div class="hscroll"><button class="arrow prev" aria-label="Влево"></button><i class="thumb"></i><button class="arrow next" aria-label="Вправо"></button></div>
    </section>
  </div>

  <div class="tasks"><button><svg class="ico"><use href="#i-cubes"/></svg>Сборочные единицы</button><button class="active"><svg class="ico"><use href="#i-table"/></svg>Пример2.100.000.000 Комп...</button></div>
</main>

<aside class="callout">
  <p>- Версионность спецификации</p>
  <p>- Работа с файловым составом позиции, изделия</p>
  <p>- Работа с заменами. История замен. Варианты замен</p>
  <p>- Параллельная проработка состава изделия</p>
  <p>- Нормирование вспомогательного материала</p>
</aside>

<footer class="foot">
  <svg class="swoosh" viewBox="0 0 720 49" preserveAspectRatio="none" aria-hidden="true"><path d="M0 0h720v21Q360-4 0 21z" fill="#fff" opacity=".26"/></svg>
  <div class="brand"><div class="brand-top"><svg class="logo-l"><use href="#i-logo"/></svg><span>APS</span></div><div class="brand-sub">предприятие <b>3.0</b></div></div>
  <p>ПЛАНИРОВАНИЕ ПРОИЗВОДСТВЕННЫХ РЕСУРСОВ В СИСТЕМЕ В APS-ПРЕДПРИЯТИЕ</p>
</footer>
</body>
</html>
```
FILE: styles.css
```css
* { box-sizing: border-box; }
body {
  margin: 0;
  min-height: 100vh;
  display: flex;
  flex-direction: column;
  position: relative;
  background: #fff;
  font: 8px/10px "Liberation Sans", Arial, sans-serif;
  color: #000;
}
button { font: inherit; color: inherit; border: 0; background: none; padding: 0; margin: 0; }
i { display: block; flex: none; }
.sprite { position: absolute; width: 0; height: 0; }

.slide-head { height: 55px; display: flex; align-items: center; padding: 10px 0 0 78px; }
.slide-head h1 { margin: 0; font-size: 24px; line-height: 28px; color: #00004e; white-space: nowrap; }
.cross { position: absolute; left: 0; top: 0; width: 66px; height: 66px; z-index: 2; }

.window {
  flex: 1;
  margin: 0 31px 4px 29px;
  padding: 3px 5px 0 3px;
  background: #d4d0c8;
  border-right: 1px solid #404040;
  display: flex;
  flex-direction: column;
  min-height: 0;
}
.titlebar {
  height: 13px;
  display: flex;
  align-items: center;
  gap: 2px;
  background: linear-gradient(90deg, #0a246a, #5d7fb6 60%, #a6caf0);
  color: #fff;
  font-weight: bold;
  white-space: nowrap;
}
.logo-s { width: 12px; height: 12px; border: 1px solid #3c86c8; }
.ico { width: 11px; height: 10px; flex: none; }
.menu { height: 15px; display: flex; align-items: center; gap: 9px; padding-left: 3px; white-space: nowrap; overflow: hidden; }
.menu .ico { margin-right: -5px; }

.bar { height: 20px; margin-bottom: 1px; display: flex; gap: 2px; padding-left: 2px; }
.group {
  display: flex;
  align-items: center;
  padding-left: 7px;
  background: linear-gradient(#f0efeb, #dcd9d1);
  border-radius: 2px;
  position: relative;
}
.group:last-child { flex: 1; }
.group::before { content: ""; position: absolute; left: 2px; top: 4px; bottom: 3px; border-left: 2px dotted #8e8b84; }
.tool { width: 17px; height: 17px; flex: none; display: grid; place-items: center; }
.tool svg { width: 12px; height: 12px; display: block; }
.tool.on { background: #a7adc0; border: 1px solid #0a246a; height: 18px; }
.sep { width: 1px; height: 12px; margin: 0 3px; background: #8d8a84; }
.drop { width: 8px; display: grid; place-items: center; }
.drop::before { content: ""; border: 2px solid transparent; border-top-color: #000; border-bottom: 0; }
.more { width: 9px; height: 16px; display: grid; place-items: end center; }
.more::before { content: ""; border: 2px solid transparent; border-top-color: #000; border-bottom: 0; }
.blue { color: #2277cc; }
.gray { color: #989aa0; }
.red { color: #c8282c; }
.green { color: #2d8a3c; }
.pink { color: #d81fae; }
.gold { color: #dda51e; }
.cream { color: #f0dc96; }
.navy { color: #1c22a8; }
.hue-a svg { filter: hue-rotate(60deg); }
.hue-b svg { filter: hue-rotate(100deg); }

.work { flex: 1; display: flex; min-height: 0; }
.side {
  width: 20px;
  margin: 2px 2px 0 3px;
  align-self: flex-start;
  display: flex;
  flex-direction: column;
  align-items: center;
  padding-top: 6px;
  background: linear-gradient(90deg, #efede8, #dcd9d1);
  position: relative;
}
.side::before { content: ""; position: absolute; top: 2px; left: 3px; right: 3px; border-top: 2px dotted #8e8b84; }
.side-end { width: 20px; height: 8px; background: linear-gradient(90deg, #f6f5f2 40%, #d4d0c8); }
.side-end::after { content: ""; display: block; margin: 2px 2px 0 auto; width: 5px; height: 3px; background: #000; }

.left { width: 283px; flex: none; display: flex; flex-direction: column; border: 1px solid #808080; border-width: 1px 0 1px 1px; margin-bottom: 1px; }
.tree { height: 42px; display: flex; background: #fff; border-bottom: 3px solid #0a246a; }
.tree ul { flex: 1; list-style: none; margin: 0; padding: 1px 0 0 4px; min-width: 0; }
.tree li { display: flex; align-items: center; gap: 2px; height: 13px; white-space: nowrap; }
.tree .sel { gap: 4px; }
.sel span { flex: 1; background: #0a246a; color: #fff; line-height: 12px; }
.tree .child { margin-left: 15px; border-left: 1px dotted #888; padding-left: 7px; gap: 3px; }
.minus { width: 7px; height: 7px; border: 1px solid #808080; display: grid; place-items: center; }
.minus::before { content: ""; width: 3px; height: 1px; background: #000; }

.vscroll, .hscroll { display: flex; background: repeating-conic-gradient(#fff 0 25%, #d4d0c8 0 50%) 0 0 / 2px 2px; }
.vscroll { width: 11px; flex: none; flex-direction: column; }
.hscroll { height: 11px; flex: none; padding-right: 12px; }
.thumb, .arrow { background: #d4d0c8; border: 1px solid; border-color: #fff #606060 #606060 #fff; box-shadow: inset -1px -1px #a09d97; }
.arrow { width: 11px; height: 11px; flex: none; display: grid; place-items: center; }
.arrow::before { content: ""; border: 3px solid transparent; }
.up::before { border-width: 0 2px 2px; border-bottom-color: #000; }
.down::before { border-width: 2px 2px 0; border-top-color: #000; }
.prev::before { border-width: 3px 3px 3px 0; border-right-color: #000; }
.next::before { border-width: 3px 0 3px 3px; border-left-color: #000; }
.tree .thumb { height: 6px; }
.tree .down { margin-top: auto; }

.pane-head { height: 17px; display: flex; align-items: center; justify-content: space-between; padding: 0 4px; background: linear-gradient(90deg, #d4d0c8, #e6e3dc); }
.pane-head button svg { width: 8px; height: 8px; display: block; }
.tabs { height: 16px; padding: 1px 0 0 3px; display: flex; background: #e6e5e0; border-top: 1px solid #f4f3f0; }
.tabs button { width: 247px; text-align: left; padding-left: 3px; background: #d4d0c8; border: 1px solid; border-color: #fff #999 transparent #fff; white-space: nowrap; overflow: hidden; }
.view { flex: 1; min-height: 0; margin: 0 4px 6px 2px; background: #336393; border: 1px solid #70706c; overflow: hidden; position: relative; }
.view svg { position: absolute; inset: 0; width: 100%; height: 100%; }

.grid { flex: 1; min-width: 0; margin-left: 3px; display: flex; flex-direction: column; border: 1px solid #808080; border-width: 0 1px 2px; }
.grid-body { flex: 1; display: flex; min-height: 0; background: #fff; }
table { flex: 1; min-width: 0; align-self: flex-start; table-layout: fixed; border-collapse: separate; border-spacing: 0; }
.c-mark { width: 9px; }
.c-chk { width: 14px; }
.c-fmt { width: 16px; }
.c-zone { width: 16px; }
.c-pos { width: 17px; }
.c-kind { width: 65px; }
.c-code { width: 101px; }
th { height: 60px; background: #d4d0c8; border: solid #808080; border-width: 0 1px 1px 0; padding: 0 0 2px; vertical-align: bottom; font-weight: normal; }
th span { writing-mode: vertical-rl; transform: rotate(180deg); display: block; margin: 0 2px; white-space: nowrap; }
td { height: 19px; padding: 0 0 0 1px; border: solid #b8b8b8; border-width: 0 1px 1px 0; vertical-align: top; line-height: 9px; overflow: hidden; }
th.open, td.open { border-right: 0; }
tbody td:first-child { background: #d4d0c8; border-color: #808080; padding: 5px 0 0 2px; }
.here { width: 0; border: 4px solid transparent; border-left: 5px solid #000; border-right: 0; }
tbody tr:nth-child(even) td:not(:first-child) { background: #e9e9e9; }
tbody .cur td:not(:first-child) { background: #d3d3d3; }
tbody td:nth-child(5) { text-align: right; padding-right: 2px; }
tbody td:nth-child(6) { padding-left: 23px; }
tbody td:nth-child(7) { font-weight: bold; }
tbody td:nth-child(8) { border-right: 0; }
td input { appearance: none; display: grid; place-items: center; width: 9px; height: 9px; margin: 8px 0 0 1px; background: #fff; border: 1px solid; border-color: #777 #ddd #ddd #777; }
td input:checked::before { content: ""; width: 3px; height: 5px; border: solid #000; border-width: 0 1px 1px 0; transform: rotate(40deg); }
.grid-body .thumb { flex: 1; margin-bottom: 22px; }
.hscroll .thumb { width: 11px; }
.hscroll .next { margin-left: auto; }

.tasks { height: 17px; flex: none; display: flex; gap: 1px; padding: 1px 0 2px 3px; }
.tasks button { width: 126px; display: flex; align-items: center; gap: 4px; padding-left: 2px; border: 1px solid #c0bcb4; white-space: nowrap; }
.tasks .active { background: #c6c2ba; border-color: #a09d97; }

.callout {
  position: absolute;
  left: 427px;
  top: 47px;
  width: 280px;
  height: 264px;
  padding: 30px 0 0 18px;
  background: #ffffcc;
  border: 3px solid #4068d8;
  border-radius: 46px;
  box-shadow: 5px 5px 1px rgba(80, 80, 110, .5);
  color: #00004e;
  font-size: 16px;
  line-height: 19px;
  font-weight: bold;
}
.callout p { margin: 0 0 10px; }

.foot { height: 49px; flex: none; display: flex; align-items: center; position: relative; background: linear-gradient(#2f82c0, #0059a5 35%, #00468c); }
.swoosh { position: absolute; inset: 0; width: 100%; height: 100%; }
.foot p { position: relative; margin: 8px 0 0 24px; font-size: 13px; line-height: 14px; font-weight: bold; color: #ffff33; white-space: nowrap; }
.brand { position: relative; width: 82px; padding: 4px 0 0 8px; color: #fff; }
.brand-top { display: flex; align-items: center; gap: 4px; font: bold 26px/20px "Liberation Serif", serif; }
.logo-l { width: 19px; height: 18px; flex: none; }
.brand-sub { display: flex; justify-content: space-between; align-items: baseline; font-size: 9px; line-height: 12px; color: #a9cdea; }
.brand-sub b { font-size: 12px; font-weight: normal; color: #e6dc7a; }
```
